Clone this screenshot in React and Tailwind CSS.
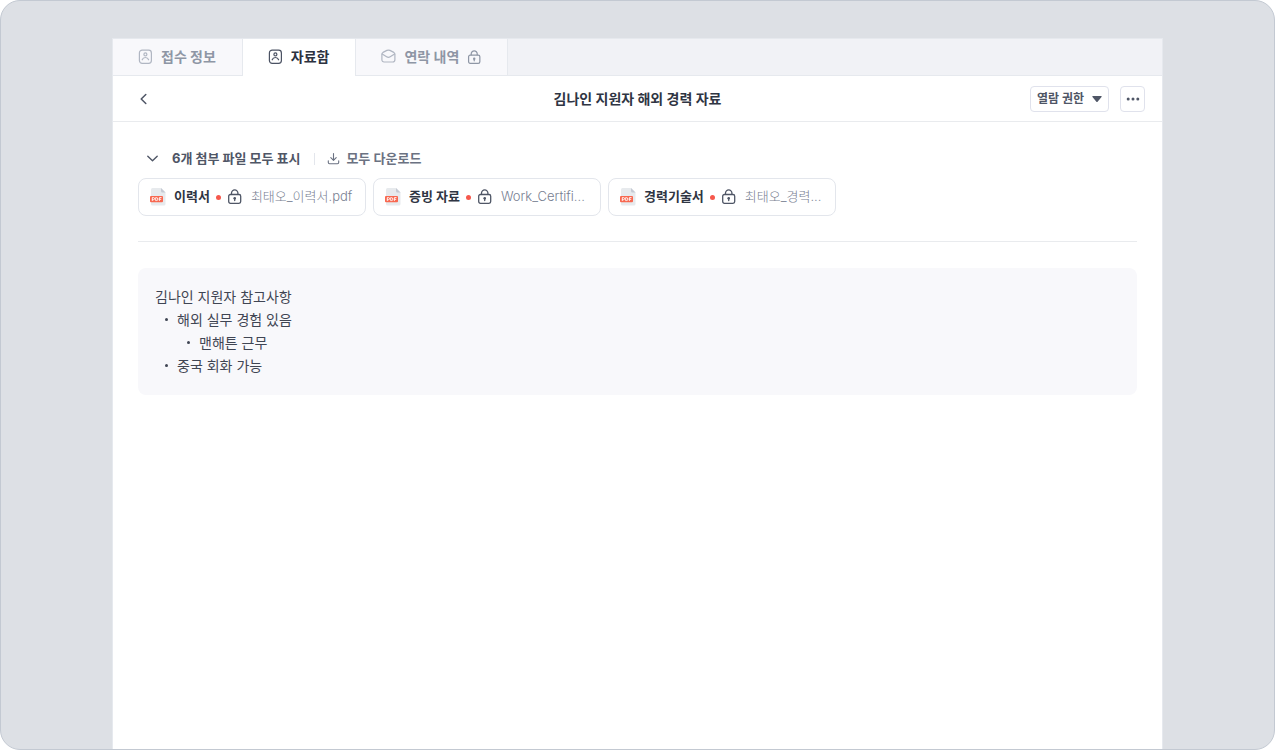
import { useState } from "react";

const tabs = [
  { id: "info", label: "접수 정보", icon: "profile", locked: false },
  { id: "files", label: "자료함", icon: "profile", locked: false },
  { id: "contact", label: "연락 내역", icon: "mail", locked: true },
];

const files = [
  { id: 1, title: "이력서", name: "최태오_이력서.pdf" },
  { id: 2, title: "증빙 자료", name: "Work_Certifi..." },
  { id: 3, title: "경력기술서", name: "최태오_경력..." },
];

const ProfileIcon = ({ className }) => (
  <svg viewBox="0 0 16 16" fill="none" stroke="currentColor" strokeWidth="1.2" strokeLinecap="round" className={className} aria-hidden="true">
    <rect x="2.4" y="1.1" width="12" height="13.2" rx="2.8" />
    <circle cx="8.4" cy="5.400" r="1.5" />
    <path d="M5.200 10.800c.5-1.500 1.700-2.300 3.200-2.300s2.700.8 3.200 2.300" />
  </svg>
);

const MailIcon = ({ className }) => (
  <svg viewBox="0 0 16 16" fill="none" stroke="currentColor" strokeWidth="1.2" strokeLinecap="round" strokeLinejoin="round" className={className} aria-hidden="true">
    <path d="M1.9 5.200c0-.8.4-1.400 1.100-1.800l3.900-2c1-.5 2-.5 3 0l3.900 2c.7.4 1.100 1 1.100 1.800v5.600c0 1.300-.9 2.200-2.200 2.200H4.100c-1.300 0-2.200-.9-2.200-2.200z" />
    <path d="m2.200 5 4.400 2.800c1.100.7 2.500.7 3.600 0L14.600 5" />
  </svg>
);

const LockIcon = ({ className }) => (
  <svg viewBox="0 0 16 16" fill="none" stroke="currentColor" strokeWidth="1.3" className={className} aria-hidden="true">
    <rect x="1.700" y="5.500" width="12" height="8.8" rx="1.7" />
    <path d="M4.500 5.500V4.100a3.200 3.200 0 0 1 6.400 0v1.400" />
    <circle cx="7.700" cy="9.200" r="1.3" fill="currentColor" stroke="none" />
    <path d="M7.700 9.500v2" strokeLinecap="round" />
  </svg>
);

const PdfIcon = () => (
  <svg viewBox="0 0 18 18" className="size-[18px] shrink-0" aria-hidden="true">
    <path d="M3.500 0H12l4.500 4.500v11.500a1.500 1.500 0 0 1-1.500 1.500H3.500A1.500 1.500 0 0 1 2 16V1.500A1.500 1.500 0 0 1 3.500 0z" fill="#e7eaed" />
    <path d="M12 0l4.500 4.500h-3A1.500 1.500 0 0 1 12 3z" fill="#c5cad3" />
    <rect x="1" y="8" width="13" height="6.300" rx="1" fill="#f8674f" />
    <g fill="none" stroke="#fff" strokeWidth="0.9">
      <path d="M3.300 12.900v-3.300h1.200a1 1 0 0 1 0 2.100H3.300" />
      <path d="M6.700 9.600v3h.7a1.500 1.500 0 0 0 0-3z" />
      <path d="M10.400 12.900v-3.300h2.100M10.400 11.300h1.800" />
    </g>
  </svg>
);

const Tab = ({ tab, active, onSelect }) => (
  <button
    type="button"
    role="tab"
    aria-selected={active}
    onClick={onSelect}
    className={
      active
        ? "flex items-center gap-2 border-b border-white bg-white pl-6 pr-[26px] text-sm font-bold text-[#2c323f]"
        : "flex items-center gap-2 border-b border-[#e6e9ee] bg-[#f8f8fb] pl-6 pr-[26px] text-sm font-bold text-[#8e96a5] first:border-r last:border-x last:pr-[25px]"
    }
  >
    {tab.icon === "mail" ? (
      <MailIcon className="size-4 text-[#b0b6c2]" />
    ) : (
      <ProfileIcon className={active ? "size-4 text-[#4b5263]" : "size-4 text-[#b0b6c2]"} />
    )}
    <span>{tab.label}</span>
    {tab.locked && <LockIcon className="size-[15px]" />}
  </button>
);

const FileCard = ({ file }) => (
  <a
    href="#file"
    className="flex h-[38px] w-[228px] items-center rounded-lg border border-[#e3e6ec] bg-white pl-[10px] pr-2"
  >
    <PdfIcon />
    <span className="ml-[7px] shrink-0 text-[13px] font-bold text-[#2f3543]">{file.title}</span>
    <span className="ml-1.5 size-[5px] shrink-0 rounded-full bg-[#f6584c]" />
    <LockIcon className="ml-1.5 size-4 shrink-0 text-[#4f5666]" />
    <span className="ml-2 whitespace-nowrap text-[13px] font-light text-[#788091]">{file.name}</span>
  </a>
);

const Note = ({ text, children }) => (
  <li>
    <div className="flex items-center gap-[9px] before:ml-[10px] before:size-[3px] before:rounded-full before:bg-[#3f4553]">
      {text}
    </div>
    {children}
  </li>
);

const App = () => {
  const [activeTab, setActiveTab] = useState("files");
  const [expanded, setExpanded] = useState(true);

  return (
    <div className="flex min-h-screen flex-col rounded-[20px] border border-[#c3c9d2] bg-[#dde0e5] px-[111px] pt-[37px] font-[Inter,'Noto_Sans_CJK_KR',sans-serif]">
      <div className="flex flex-1 flex-col border-x border-[#e6e9ee] bg-white">
        <div role="tablist" className="flex h-[38px] border-t border-[#e6e9ee] bg-[#f1f2f6]">
          <div className="flex">
            {tabs.map((tab) => (
              <Tab
                key={tab.id}
                tab={tab}
                active={tab.id === activeTab}
                onSelect={() => setActiveTab(tab.id)}
              />
            ))}
          </div>
          <div className="flex-1 border-b border-[#e6e9ee]" />
        </div>

        <header className="grid h-[46px] grid-cols-[1fr_auto_1fr] items-center border-b border-[#e9ebee] px-[17px]">
          <button type="button" aria-label="뒤로" className="ml-1 flex size-5 items-center justify-center text-[#4f5666]">
            <svg viewBox="0 0 16 16" fill="none" stroke="currentColor" strokeWidth="1.5" strokeLinecap="round" strokeLinejoin="round" className="size-4" aria-hidden="true">
              <path d="M9.8 3.500 5.200 8l4.600 4.500" />
            </svg>
          </button>
          <h1 className="text-sm font-bold text-[#2f3543]">김나인 지원자 해외 경력 자료</h1>
          <div className="flex items-center justify-end gap-[11px]">
            <button
              type="button"
              className="flex h-[26px] items-center gap-2 rounded border border-[#e0e2ec] px-1.5 text-xs font-bold text-[#4f5666]"
            >
              열람 권한
              <svg viewBox="0 0 10 6" fill="currentColor" className="h-1.5 w-[10px]" aria-hidden="true">
                <path d="M1 0h8a.7.7 0 0 1 .5 1.100L5.600 5.700a.8.8 0 0 1-1.200 0L.5 1.100A.7.7 0 0 1 1 0z" />
              </svg>
            </button>
            <button
              type="button"
              aria-label="더보기"
              className="flex h-[26px] w-[25px] items-center justify-center rounded border border-[#e0e2ec] text-[#4f5666]"
            >
              <svg viewBox="0 0 14 4" fill="currentColor" className="h-1 w-[14px]" aria-hidden="true">
                <circle cx="2.200" cy="2" r="1.5" />
                <circle cx="7" cy="2" r="1.5" />
                <circle cx="11.800" cy="2" r="1.5" />
              </svg>
            </button>
          </div>
        </header>

        <main className="px-[25px] pt-[27px]">
          <section className="border-b border-[#e9ebee] pb-[25px]">
            <div className="flex h-5 items-center text-[13px]">
              <button
                type="button"
                aria-expanded={expanded}
                onClick={() => setExpanded(!expanded)}
                className="flex items-center gap-3 pl-1.5 font-bold text-[#4f5666]"
              >
                <svg viewBox="0 0 16 16" fill="none" stroke="currentColor" strokeWidth="1.4" strokeLinecap="round" strokeLinejoin="round" className="size-4" aria-hidden="true">
                  <path d="M3.800 5.300 8.500 9.800l4.700-4.500" />
                </svg>
                6개 첨부 파일 모두 표시
              </button>
              <span className="ml-[14px] h-3 w-px bg-[#e3e6ec]" />
              <button type="button" className="ml-3 flex items-center gap-[5px] font-semibold text-[#6b7282]">
                <svg viewBox="0 0 14 14" fill="none" stroke="currentColor" strokeWidth="1.1" strokeLinecap="round" strokeLinejoin="round" className="size-[14px]" aria-hidden="true">
                  <path d="M6.500 1.600v6.600M3.800 5.700l2.700 2.700 2.700-2.700" />
                  <path d="M1.300 8.800v1.700c0 .8.5 1.200 1.200 1.200h8c.7 0 1.200-.4 1.200-1.200V8.800" />
                </svg>
                모두 다운로드
              </button>
            </div>
            {expanded && (
              <div className="mt-[9px] flex flex-wrap gap-[7px]">
                {files.map((file) => (
                  <FileCard key={file.id} file={file} />
                ))}
              </div>
            )}
          </section>

          <section className="mt-[26px] rounded-lg bg-[#f8f8fb] px-[17px] pt-[17px] pb-[18px] text-sm leading-[23px] text-[#3f4553]">
            <p>김나인 지원자 참고사항</p>
            <ul>
              <Note text="해외 실무 경험 있음">
                <ul className="pl-[22px]">
                  <Note text="맨해튼 근무" />
                </ul>
              </Note>
              <Note text="중국 회화 가능" />
            </ul>
          </section>
        </main>
      </div>
    </div>
  );
};

export default App;
